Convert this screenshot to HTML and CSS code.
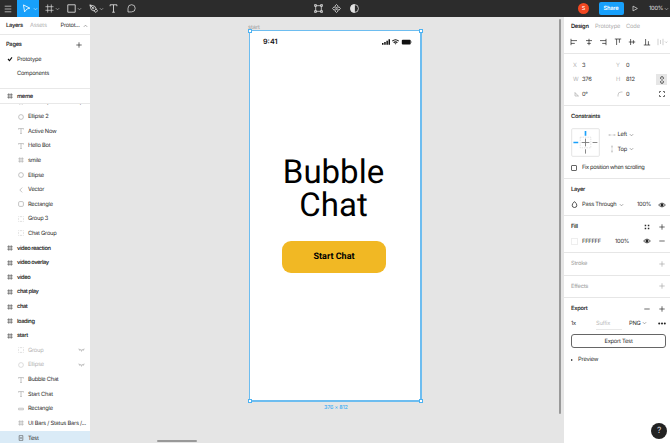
FILE: index.html
```html
<!DOCTYPE html>
<html lang="en">
<head>
<meta charset="utf-8">
<title>Bubble Chat</title>
<link rel="stylesheet" href="styles.css">
</head>
<body>
<svg class="defs" width="0" height="0">
  <symbol id="frame" viewBox="0 0 10 10"><path d="M3 .5v9M7 .5v9M.5 3h9M.5 7h9"/></symbol>
  <symbol id="circle" viewBox="0 0 10 10"><circle cx="5" cy="5" r="4"/></symbol>
  <symbol id="text" viewBox="0 0 10 10"><path d="M.5 2.500V1h9v1.500M5 1v8.500M3.500 9.500h3"/></symbol>
  <symbol id="rect" viewBox="0 0 10 10"><rect x="1" y="1" width="8" height="8" rx="2"/></symbol>
  <symbol id="vector" viewBox="0 0 10 10"><path d="M7 1 3 5l4 4"/></symbol>
  <symbol id="group" viewBox="0 0 10 10"><path d="M.5 1h1.500M3.500 1h3M8 1h1.500M.5 9h1.500M3.500 9h3M8 9h1.500M.5 3.500v3M9.500 3.500v3"/></symbol>
  <symbol id="line" viewBox="0 0 10 10"><rect x=".5" y="3.700" width="9" height="2.600" rx="1"/></symbol>
  <symbol id="phone" viewBox="0 0 10 10"><rect x="2" y=".5" width="6" height="9" rx="1"/><path d="M4.500 3.500h1v3h-1z" stroke-width=".7"/></symbol>
  <symbol id="lash" viewBox="0 0 10 6"><path d="M.5 1.500Q5 5 9.500 1.500M2.500 3.500 1.800 4.500M5 3.800v1.500M7.500 3.500l.7 1"/></symbol>
  <symbol id="chev" viewBox="0 0 6 4"><path d="m1 1 2 2 2-2"/></symbol>
  <symbol id="plus" viewBox="0 0 6 6"><path d="M3 .3v5.400M.3 3h5.400"/></symbol>
  <symbol id="minus" viewBox="0 0 6 6"><path d="M.3 3h5.400"/></symbol>
  <symbol id="eye" viewBox="0 0 8 6"><path d="M.6 3Q4-.8 7.400 3 4 6.800.6 3z"/><circle cx="4" cy="3" r="1.200" fill="currentColor"/></symbol>
</svg>

<header class="toolbar">
  <div class="tools">
    <svg class="ic menu" viewBox="0 0 8 8"><path d="M.7 1.200h6.600M.7 4h6.600M.7 6.800h6.600"/></svg>
    <div class="tool active"><svg class="ic t8" viewBox="0 0 8 8"><path d="M1.300.8 7 3.700 4.300 4.500 2.300 7z"/></svg><svg class="ic cv"><use href="#chev"/></svg></div>
    <div class="tool frame-tool"><svg class="ic t8"><use href="#frame"/></svg><svg class="ic cv"><use href="#chev"/></svg></div>
    <div class="tool"><svg class="ic t8" viewBox="0 0 8 8"><path d="M.7.7h6.600v6.600H.7z"/></svg><svg class="ic cv"><use href="#chev"/></svg></div>
    <div class="tool"><svg class="ic t8" viewBox="0 0 8 8"><path d="M.8.8 5 2l1.300 2.300-1.800 1.900L2 5zM.8.8 3.500 3.500M6.300 4.300 7.600 6 6.200 7.500 4.500 6.200"/><circle cx="3.700" cy="3.700" r=".6"/></svg><svg class="ic cv"><use href="#chev"/></svg></div>
    <svg class="ic t8 solo" viewBox="0 0 8 8"><path d="M1 2V.7h6V2M4 .7v6.600M2.800 7.300h2.400"/></svg>
    <svg class="ic t9" viewBox="0 0 9 9"><path d="M1 8V4.300a3.600 3.600 0 1 1 3.600 3.600z"/></svg>
  </div>
  <div class="mid">
    <svg class="ic t8" viewBox="0 0 8 8"><path d="M1.500 1.500h5v5h-5z"/><path d="M.5.5h1.600v1.600H.5zM5.900.5h1.600v1.600H5.900zM.5 5.900h1.600v1.600H.5zM5.900 5.900h1.600v1.600H5.900z"/></svg>
    <svg class="ic t8" viewBox="0 0 8 8"><path d="m4 .4 1.500 1.500L4 3.400 2.500 1.900zM4 4.600l1.500 1.500L4 7.600 2.500 6.100zM1.900 2.500 3.400 4 1.900 5.500.4 4zM6.100 2.500 7.600 4 6.100 5.500 4.600 4z"/></svg>
    <svg class="ic t8" viewBox="0 0 8 8"><circle cx="4" cy="4" r="3.500"/><path d="M4 .5a3.500 3.500 0 0 0 0 7z" fill="currentColor"/></svg>
  </div>
  <div class="actions">
    <span class="avatar">S</span>
    <span class="share">Share</span>
    <svg class="ic play" viewBox="0 0 6 6"><path d="M1 .6 5.400 3 1 5.400z"/></svg>
    <span class="zoom">100%</span><svg class="ic cv"><use href="#chev"/></svg>
  </div>
</header>

<main class="workspace">
  <aside class="left">
    <div class="tabs"><b>Layers</b><span class="muted">Assets</span><span class="pagesel">Protot...</span><svg class="ic cv up"><use href="#chev"/></svg></div>
    <section class="pages">
      <div class="pages-head"><b>Pages</b><svg class="ic p6"><use href="#plus"/></svg></div>
      <div class="page"><svg class="ic check" viewBox="0 0 6 6"><path d="m1 3 1.500 1.600L5 1.400"/></svg><span>Prototype</span></div>
      <div class="page"><i class="check"></i><span>Components</span></div>
    </section>
    <div class="row top sticky"><svg class="ic"><use href="#frame"/></svg><span>meme</span></div>
    <div class="layers">
      <div class="row"><svg class="ic"><use href="#frame"/></svg><span>UI Bars / Status Bars /...</span></div>
      <div class="row"><svg class="ic"><use href="#circle"/></svg><span>Ellipse 2</span></div>
      <div class="row"><svg class="ic"><use href="#text"/></svg><span>Active Now</span></div>
      <div class="row"><svg class="ic"><use href="#text"/></svg><span>Hello Bot</span></div>
      <div class="row"><svg class="ic"><use href="#frame"/></svg><span>smile</span></div>
      <div class="row"><svg class="ic"><use href="#circle"/></svg><span>Ellipse</span></div>
      <div class="row"><svg class="ic"><use href="#vector"/></svg><span>Vector</span></div>
      <div class="row"><svg class="ic"><use href="#rect"/></svg><span>Rectangle</span></div>
      <div class="row faint"><svg class="ic"><use href="#group"/></svg><span>Group 3</span></div>
      <div class="row faint"><svg class="ic"><use href="#group"/></svg><span>Chat Group</span></div>
      <div class="row top"><svg class="ic"><use href="#frame"/></svg><span>video reaction</span></div>
      <div class="row top"><svg class="ic"><use href="#frame"/></svg><span>video overlay</span></div>
      <div class="row top"><svg class="ic"><use href="#frame"/></svg><span>video</span></div>
      <div class="row top"><svg class="ic"><use href="#frame"/></svg><span>chat play</span></div>
      <div class="row top"><svg class="ic"><use href="#frame"/></svg><span>chat</span></div>
      <div class="row top"><svg class="ic"><use href="#frame"/></svg><span>loading</span></div>
      <div class="row top"><svg class="ic"><use href="#frame"/></svg><span>start</span></div>
      <div class="row off"><svg class="ic"><use href="#group"/></svg><span>Group</span><svg class="lash"><use href="#lash"/></svg></div>
      <div class="row off"><svg class="ic"><use href="#circle"/></svg><span>Ellipse</span><svg class="lash"><use href="#lash"/></svg></div>
      <div class="row"><svg class="ic"><use href="#text"/></svg><span>Bubble Chat</span></div>
      <div class="row"><svg class="ic"><use href="#text"/></svg><span>Start Chat</span></div>
      <div class="row"><svg class="ic"><use href="#line"/></svg><span>Rectangle</span></div>
      <div class="row"><svg class="ic"><use href="#frame"/></svg><span>UI Bars / Status Bars /...</span></div>
      <div class="row selected"><svg class="ic"><use href="#phone"/></svg><span>Test</span></div>
    </div>
  </aside>

  <div class="canvas">
    <span class="frame-label">start</span>
    <div class="artboard">
      <div class="status">
        <span>9:41</span>
        <svg class="signals" viewBox="0 0 30 6">
          <path d="M0 4h1.500v1.700H0zM2.200 3h1.500v2.700H2.200zM4.400 1.800h1.500v3.900H4.400zM6.500.3H8v5.400H6.500z" fill="#111"/>
          <path d="M10.300 2.200q3.200-2.800 6.400 0M11.600 3.700q1.900-1.600 3.800 0" fill="none" stroke="#111" stroke-width="1.100"/><path d="m12.500 4.500 1 1.100 1-1.100q-1-.7-2 0z" fill="#111"/>
          <rect x="19.800" y=".7" width="8.900" height="4.700" rx="1" fill="#111"/><rect x="29" y="2.200" width=".7" height="1.700" fill="#999"/>
        </svg>
      </div>
      <h1><span>Bubble</span><span>Chat</span></h1>
      <div class="start">Start Chat</div>
      <i class="handle tl"></i><i class="handle tr"></i><i class="handle bl"></i><i class="handle br"></i>
    </div>
    <span class="dims">376 × 812</span>
    <i class="scroll-h"></i><i class="scroll-v"></i>
  </div>

  <aside class="right">
    <div class="rtabs"><b>Design</b><span>Prototype</span><span>Code</span></div>
    <div class="align">
      <svg class="ic" viewBox="0 0 8 8"><path d="M1 .8v6.400M1 2.600h6M1 5.400h3.800"/></svg>
      <svg class="ic" viewBox="0 0 8 8"><path d="M4 .8v6.400M1 2.600h6M2.200 5.400h3.600"/></svg>
      <svg class="ic" viewBox="0 0 8 8"><path d="M7 .8v6.400M1 2.600h6M3.200 5.400H7"/></svg>
      <svg class="ic" viewBox="0 0 8 8"><path d="M.8 1h6.400M2.600 1v6M5.400 1v3.800"/></svg>
      <svg class="ic" viewBox="0 0 8 8"><path d="M.8 4h6.400M2.600 1v6M5.400 2.200v3.600"/></svg>
      <svg class="ic" viewBox="0 0 8 8"><path d="M.8 7h6.400M2.600 1v6M5.400 3.200V7"/></svg>
      <svg class="ic pale wide" viewBox="0 0 11 8"><path d="M1 .8v6.400M6 .8v6.400M3.500 2v4M8 3.500l1.200 1.200 1.200-1.200"/></svg>
    </div>
    <section class="props">
      <span class="k">X</span><span>3</span><span class="k">Y</span><span>0</span><i></i>
      <span class="k">W</span><span>376</span><span class="k">H</span><span>812</span><span class="link"><svg class="ic" viewBox="0 0 8 8"><path d="M2.600 3V2a1.400 1.400 0 0 1 2.800 0v1M2.600 5v1a1.400 1.400 0 0 0 2.800 0V5M4 2.800v2.400"/></svg></span>
      <svg class="ic k" viewBox="0 0 8 8"><path d="M2 2v4h4M2 3.500Q4.500 3.500 4.500 6"/></svg><span>0°</span><svg class="ic k" viewBox="0 0 8 8"><path d="M2 6.500V5q0-3 3-3h1.500"/></svg><span>0</span><span class="corners"><svg class="ic" viewBox="0 0 8 8"><path d="M1.500 3V1.500H3M5 1.500h1.500V3M6.500 5v1.500H5M3 6.500H1.500V5"/></svg></span>
    </section>
    <section class="constraints">
      <b>Constraints</b>
      <div class="cons">
        <svg class="cbox" viewBox="0 0 30 30"><rect x=".7" y=".7" width="28.600" height="28.600" rx="1" fill="#fff" stroke="#e3e3e3"/><rect x="9.500" y="9.500" width="11" height="11" fill="none" stroke="#ccc" stroke-width=".6" stroke-dasharray="1.500 1"/><path d="M15 3v5M2.500 15h5" stroke="#18a0fb" stroke-width="1.700"/><path d="M15 22v4.500M22.300 15h5M15 11v8M11 15h8" stroke="#777" stroke-width=".9"/></svg>
        <div class="cvals">
          <div><svg class="ic k" viewBox="0 0 8 8"><path d="M1.500 4h2M4.500 4h2M1.200 3v2M6.800 3v2"/></svg><span>Left</span><svg class="ic cv"><use href="#chev"/></svg></div>
          <div><svg class="ic k" viewBox="0 0 8 8"><path d="M4 1.500v2M4 4.500v2M3 1.200h2M3 6.800h2"/></svg><span>Top</span><svg class="ic cv"><use href="#chev"/></svg></div>
        </div>
      </div>
      <div class="fix"><i class="box"></i><span>Fix position when scrolling</span></div>
    </section>
    <section class="layer">
      <b>Layer</b>
      <div class="line"><svg class="ic drop" viewBox="0 0 6 6"><path d="M3 .5Q5 2.300 5 3.600a2 2 0 0 1-4 0Q1 2.300 3 .5z"/></svg><span>Pass Through</span><svg class="ic cv"><use href="#chev"/></svg><span class="pct">100%</span><svg class="ic eye"><use href="#eye"/></svg></div>
    </section>
    <section class="fill">
      <div class="head"><b>Fill</b><svg class="ic p6" viewBox="0 0 6 6"><path d="M.7 1.500h1.500M3.800 1.500h1.500M.7 4.500h1.500M3.800 4.500h1.500" stroke-width="1.500"/></svg><svg class="ic p6"><use href="#plus"/></svg></div>
      <div class="line"><i class="swatch"></i><span class="hex">FFFFFF</span><span>100%</span><svg class="ic eye"><use href="#eye"/></svg><svg class="ic p6"><use href="#minus"/></svg></div>
    </section>
    <section class="slim"><b>Stroke</b><svg class="ic p6"><use href="#plus"/></svg></section>
    <section class="slim"><b>Effects</b><svg class="ic p6"><use href="#plus"/></svg></section>
    <section class="export">
      <div class="head"><b>Export</b><svg class="ic p6"><use href="#minus"/></svg><svg class="ic p6"><use href="#plus"/></svg></div>
      <div class="line"><span class="scale">1x</span><span class="suffix">Suffix</span><span class="png">PNG</span><svg class="ic cv"><use href="#chev"/></svg><svg class="dots" viewBox="0 0 8 3"><circle cx="1.200" cy="1.500" r="1"/><circle cx="4" cy="1.500" r="1"/><circle cx="6.800" cy="1.500" r="1"/></svg></div>
      <div class="btn">Export Test</div>
      <div class="preview"><i></i><span>Preview</span></div>
    </section>
    <span class="help">?</span>
  </aside>
</main>
</body>
</html>
```

FILE: styles.css
```css
* { box-sizing: border-box; }
body { margin: 0; width: 670px; height: 443px; overflow: hidden; font: 5.700px/8px Inter, sans-serif; letter-spacing: -.22px; text-rendering: geometricPrecision; color: #2b2b2b; background: #e5e5e5; }
b { font-weight: 600; letter-spacing: -.25px; }
b, .row span, .page span, .tabs span, .props span, .cvals span, .fix span, .line span, .preview span { padding-top: 1px; }
.defs { position: absolute; }
.ic { fill: none; stroke: currentColor; stroke-width: .7; flex: none; width: 8px; height: 8px; display: block; }
.ic.cv { width: 5px; height: 4px; stroke-width: .8; opacity: .6; }
.ic.p6 { width: 6px; height: 6px; }

.toolbar { height: 17px; background: #2c2c2c; color: #e2e2e2; display: flex; align-items: center; }
.tools { display: flex; align-items: center; height: 17px; width: 313.500px; }
.menu { margin-left: 4px; margin-right: 5px; }
.tool { display: flex; align-items: center; height: 17px; width: 21.800px; gap: 1.200px; padding-left: 1px; }
.tool.active { width: 22px; background: #18a0fb; color: #fff; padding-left: 5px; gap: 2px; }
.tool.frame-tool { margin-left: 5px; }
.ic.t8 { width: 9px; height: 9px; }
.ic.t9 { width: 9px; height: 9px; margin-left: 9px; }
.tools .t8, .tools .t9 { stroke-width: .75; }
.mid { display: flex; gap: 9.300px; width: 264.500px; }
.actions { display: flex; align-items: center; }
.avatar { width: 11px; height: 11px; border-radius: 50%; background: #f24822; color: #fff; text-align: center; line-height: 12px; font-size: 5.500px; }
.share { margin-left: 9.500px; width: 25px; height: 13px; border-radius: 2px; background: #18a0fb; color: #fff; text-align: center; line-height: 13.500px; font-weight: 600; }
.play { margin-left: 8.500px; width: 6px !important; height: 7px !important; }
.zoom { margin-left: 11px; width: 14.500px; white-space: nowrap; }
.toolbar .cv { opacity: .8; }

.workspace { display: flex; height: 426px; }
.left { width: 90px; background: #fff; flex: none; }
.tabs { height: 18px; display: flex; align-items: center; padding-left: 6px; border-bottom: 1px solid #e8e8e8; }
.tabs b { width: 24px; }
.tabs .muted { width: 30.500px; color: #b0b0b0; }
.pagesel { width: 22px; }
.tabs .up { transform: scaleY(-1); }
.pages { height: 54px; padding-top: 5px; border-bottom: 1px solid #e8e8e8; }
.pages-head { display: flex; justify-content: space-between; align-items: center; padding: 0 8px 0 6px; height: 9px; }
.page { height: 14.600px; display: flex; align-items: center; padding-left: 7px; }
.pages-head + .page { margin-top: 3px; }
.check { width: 6px !important; height: 6px !important; margin-right: 4px; color: #111; stroke-width: 1.100; }
.row { height: 14.610px; display: flex; align-items: center; padding-left: 18px; white-space: nowrap; }
.row > .ic { width: 6px; height: 6px; margin-right: 4px; color: #a6a6a6; stroke-width: 1.100; }
.row.top { padding-left: 7px; font-weight: 600; letter-spacing: -.4px; }
.row.top > .ic { color: #555; stroke-width: 1.200; }
.row.faint > .ic { color: #ccc; }
.row.sticky { height: 15px; border-bottom: 1px solid #e8e8e8; letter-spacing: -.3px; }
.layers { height: 339px; overflow: hidden; }
.layers .row:first-child { margin-top: -9.300px; }
.row.off { color: #b3b3b3; }
.row.off > .ic { color: #ccc; }
.row .lash { width: 7px; height: 4px; margin-left: auto; margin-right: 5px; fill: none; stroke: #999; stroke-width: 1; }
.row.selected { background: #daebf7; }
.row.selected > .ic { color: #555; }

.canvas { width: 474px; position: relative; flex: none; overflow: hidden; }
.frame-label { position: absolute; left: 158px; top: 6.500px; color: #999; letter-spacing: -.05px; }
.artboard { position: absolute; left: 159px; top: 13px; width: 173px; height: 372px; background: #fff; border: 1px solid #6dbdf0; border-right-width: 2px; border-bottom-width: 2px; display: flex; flex-direction: column; align-items: center; letter-spacing: 0; }
.status { width: 100%; height: 21px; display: flex; align-items: center; justify-content: space-between; padding: 0 8px 0 13px; color: #111; font-size: 7.200px; font-weight: 600; }
.signals { width: 30px; height: 6px; }
h1 { margin: 104px 0 0; font: 400 33px/33px Roboto, sans-serif; color: #000; text-align: center; padding-right: 3px; }
h1 span { display: block; }
.start { margin-top: 19px; margin-right: 2px; width: 104px; height: 32px; border-radius: 9px; background: #f1b824; color: #000; font: 700 9px/33px Roboto, sans-serif; text-align: center; }
.handle { position: absolute; width: 4px; height: 4px; background: #fff; border: 1px solid #4db2f2; }
.tl { left: -2px; top: -2px; } .tr { right: -3px; top: -2px; }
.bl { left: -2px; bottom: -3px; } .br { right: -3px; bottom: -3px; }
.dims { position: absolute; left: 234px; top: 386.500px; color: #2ba7f5; font-size: 5.500px; letter-spacing: -.2px; }
.scroll-h { position: absolute; left: 67px; top: 423px; width: 40px; height: 2px; border-radius: 1px; background: #999; }
.scroll-v { position: absolute; left: 469px; top: 2px; width: 2px; height: 395px; border-radius: 1px; background: #999; }

.right { width: 106px; background: #fff; flex: none; position: relative; white-space: nowrap; }
.right section { border-bottom: 1px solid #e6e6e6; padding-left: 7px; }
.rtabs { display: grid; grid-template-columns: 24px 31px 20px; padding: 5px 0 0 7px; height: 18px; color: #aaa; letter-spacing: -.12px; }
.rtabs b { color: #222; }
.rtabs span { padding-top: 1px; }
.align { height: 19px; display: flex; gap: 6.600px; padding: 3px 0 0 6px; border-bottom: 1px solid #e6e6e6; color: #222; }
.align .pale { color: #bbb; }
.align .wide { width: 11px; margin-left: -1px; }
.k { color: #b3b3b3; }
.right section.props { height: 52px; padding: 4px 0 0 9px; display: grid; grid-template-columns: 9px 34px 10px 30px 11px; grid-auto-rows: 14.600px; align-items: center; }
.props .k { justify-self: start; }
.props .link { width: 11px; height: 11px; padding: 0; background: #e6e6e6; display: grid; place-items: center; justify-self: end; }
.props .corners { justify-self: end; margin-right: 1.500px; padding: 0; }
.constraints { height: 73px; padding-top: 6px; }
.constraints b, .layer b { display: block; }
.cons { display: flex; margin-top: 7px; height: 29px; }
.cbox { width: 29px; height: 29px; }
.cvals { margin-left: 7.500px; margin-top: -.5px; }
.cvals div { display: flex; align-items: center; height: 14.500px; }
.cvals .k { margin-right: 2px; }
.cvals .cv { margin-left: 2px; }
.fix { display: flex; align-items: center; margin-top: 6px; letter-spacing: -.33px; }
.box { width: 6px; height: 6px; border: 1px solid #666; border-radius: 1px; margin-right: 5px; }
.layer { height: 37px; padding-top: 6px; }
.line { display: flex; align-items: center; height: 8px; }
.layer .line { margin-top: 6.500px; }
.drop { width: 7px !important; height: 7px !important; margin-right: 4px; }
.layer .cv { margin-left: 2px; }
.pct { width: 20px; margin-left: auto; }
.eye { width: 8px !important; height: 6px !important; color: #222; }
.layer .pct { width: 19px; }
.layer .eye { margin-right: 4px; margin-left: 2px; }
.head { display: flex; align-items: center; gap: 9px; padding-right: 5px; height: 8px; }
.head b { margin-right: auto; }
.fill { height: 37px; padding-top: 6.500px; }
.fill .line { margin-top: 6.500px; padding-right: 5px; }
.swatch { width: 7px; height: 7px; border: 1px solid #eee; margin-right: 4px; }
.hex { width: 33px; }
.fill .eye { margin-left: auto; margin-right: 8px; }
.right section.slim { height: 22.500px; display: flex; align-items: center; justify-content: space-between; padding-right: 5px; color: #aaa; }
.slim b { font-weight: 500; }
.right section.export { border: 0; padding: 6.500px 4px 0 7px; }
.export .head { padding-right: 1px; }
.export .line { margin-top: 6.500px; }
.scale { width: 25px; }
.line .suffix { width: 26px; height: 12px; line-height: 8px; padding-top: 2px; margin-top: 2px; border-bottom: 1px solid #e8e8e8; color: #bbb; }
.png { margin-left: 7px; width: 13px; }
.dots { width: 8px; height: 3px; margin-left: auto; fill: #222; }
.btn { margin-top: 7px; height: 14px; border: 1px solid #666; border-radius: 3px; text-align: center; line-height: 13px; }
.preview { display: flex; align-items: center; margin-top: 7px; letter-spacing: -.15px; }
.preview i { border-left: 2.500px solid #222; border-top: 1.500px solid transparent; border-bottom: 1.500px solid transparent; margin-right: 5px; }
.help { position: absolute; right: 3px; bottom: 4px; width: 16px; height: 16px; border-radius: 50%; background: #222; color: #ddd; font-size: 8.500px; line-height: 16px; text-align: center; }
```
